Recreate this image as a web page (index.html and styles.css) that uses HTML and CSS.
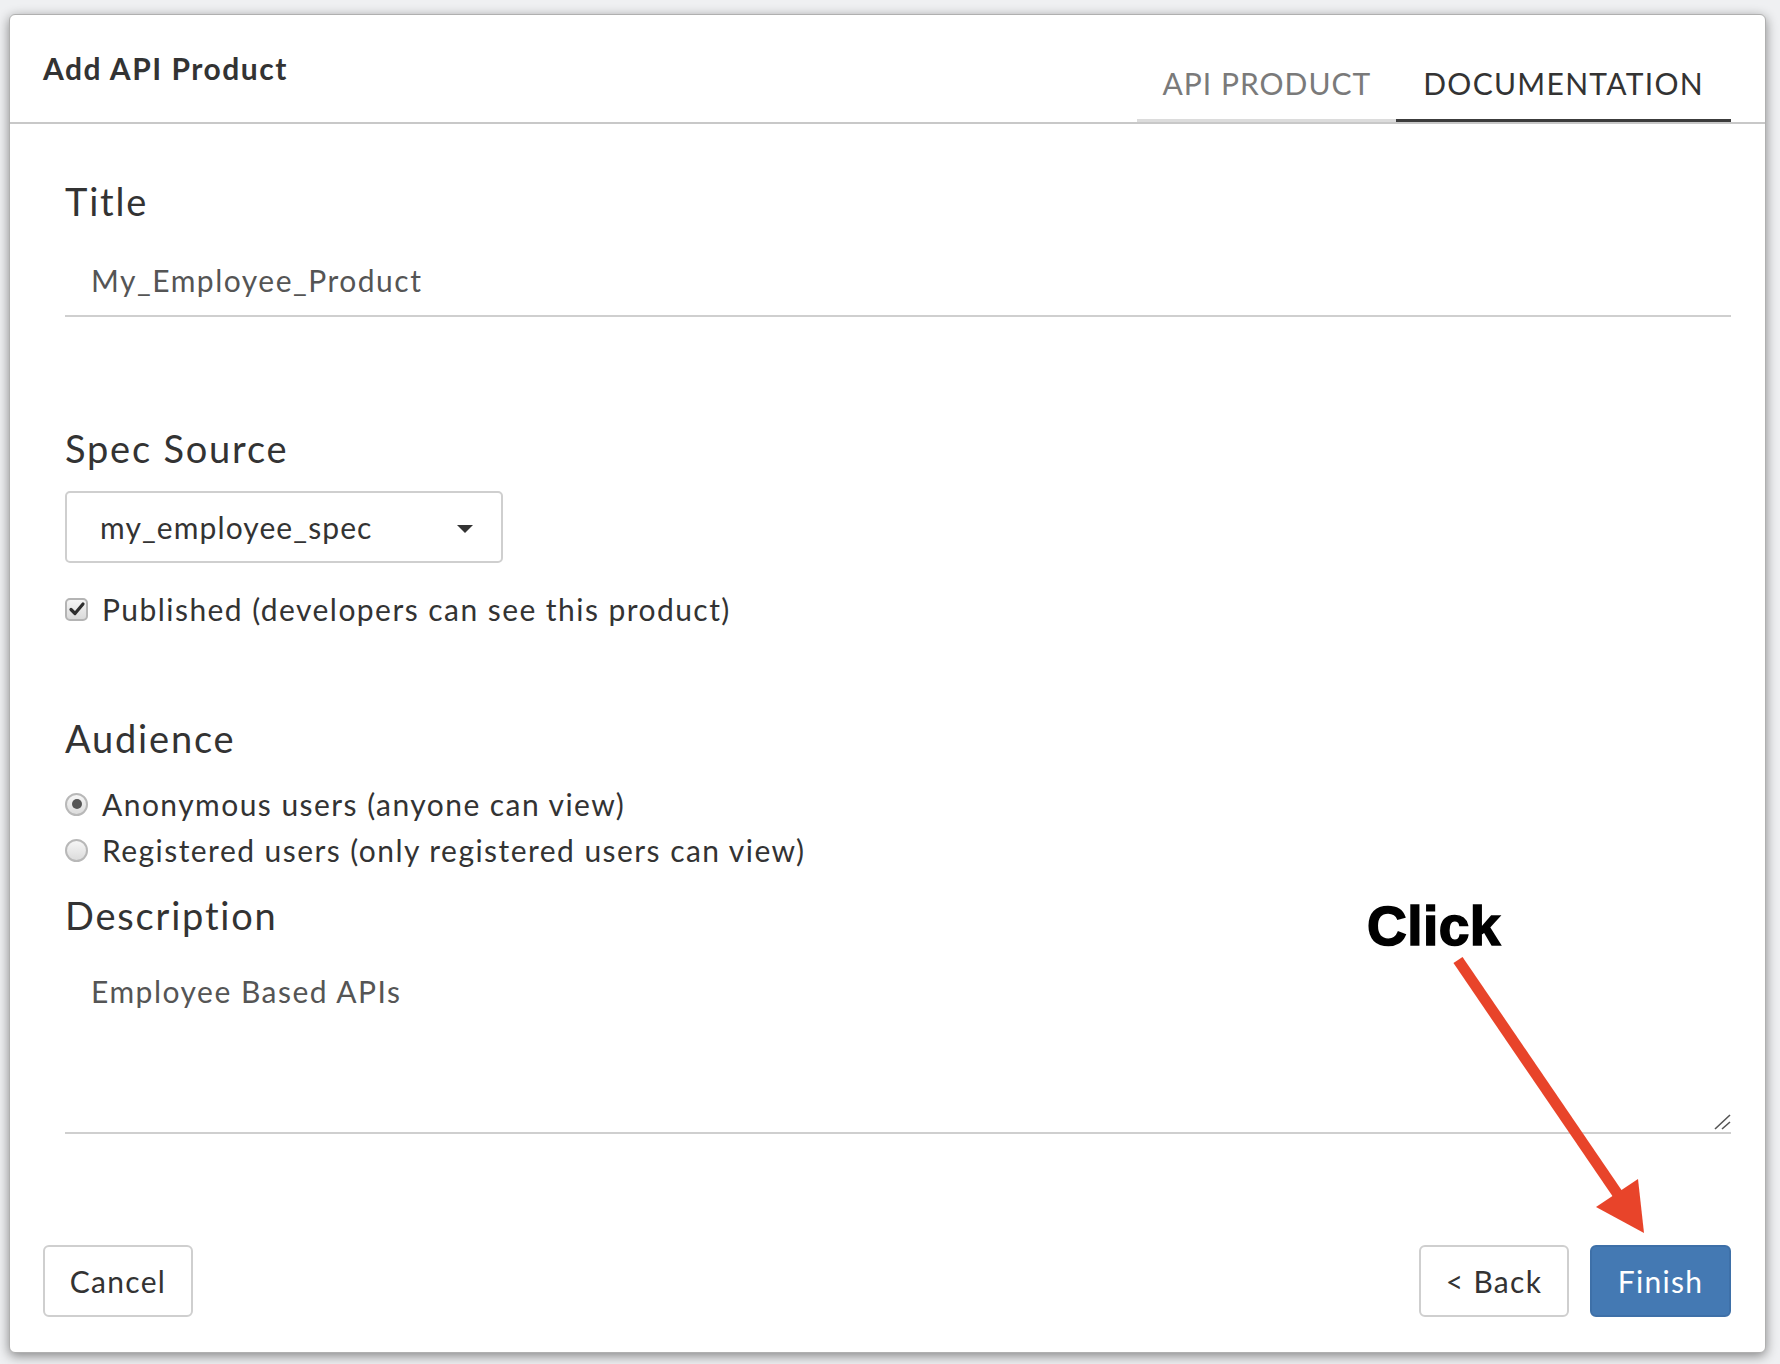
FILE: index.html
```html
<!DOCTYPE html>
<html lang="en">
<head>
<meta charset="utf-8">
<title>Add API Product</title>
<link rel="stylesheet" href="styles.css">
</head>
<body>
<div class="dialog">
  <header class="dlg-header">
    <h1 class="dlg-title">Add API Product</h1>
    <nav class="tabs">
      <span class="tab tab-product">API PRODUCT</span>
      <span class="tab active">DOCUMENTATION</span>
    </nav>
  </header>

  <main class="dlg-body">
    <section class="field field-title">
      <div class="field-label">Title</div>
      <div class="text-input">My_Employee_Product</div>
    </section>

    <section class="field field-spec">
      <div class="field-label">Spec Source</div>
      <div class="select">
        <span class="select-value">my_employee_spec</span>
        <span class="caret"></span>
      </div>
      <div class="check-row">
        <span class="checkbox">
          <svg viewBox="0 0 22 22" width="22" height="22"><path d="M5 11.5 L9 15.5 L17 6" fill="none" stroke="#2e2e2e" stroke-width="3.2" stroke-linecap="round" stroke-linejoin="round"/></svg>
        </span>
        <span class="opt-label">Published (developers can see this product)</span>
      </div>
    </section>

    <section class="field field-audience">
      <div class="field-label">Audience</div>
      <div class="radio-row">
        <span class="radio checked"></span>
        <span class="opt-label">Anonymous users (anyone can view)</span>
      </div>
      <div class="radio-row">
        <span class="radio"></span>
        <span class="opt-label">Registered users (only registered users can view)</span>
      </div>
    </section>

    <section class="field field-desc">
      <div class="field-label">Description</div>
      <div class="textarea">
        <span class="textarea-value">Employee Based APIs</span>
        <svg class="grip" viewBox="0 0 17 16" width="17" height="16"><path d="M1 15 L16 1 M8 15 L16 8" stroke="#555" stroke-width="1.6" fill="none"/></svg>
      </div>
    </section>
  </main>

  <footer class="dlg-footer">
    <button class="btn btn-cancel">Cancel</button>
    <div class="footer-right">
      <button class="btn btn-back">&lt; Back</button>
      <button class="btn btn-primary">Finish</button>
    </div>
  </footer>
</div>

<div class="annotation">
  <div class="click-text">Click</div>
  <svg class="arrow" viewBox="0 0 1780 1364" width="1780" height="1364">
    <line x1="1458" y1="960" x2="1619" y2="1196" stroke="#e8442a" stroke-width="11"/>
    <polygon points="1644,1233 1596,1207 1638,1179" fill="#e8442a"/>
  </svg>
</div>
</body>
</html>
```

FILE: styles.css
```css
* { box-sizing: border-box; }

html, body {
  margin: 0;
  padding: 0;
}

body {
  width: 1780px;
  height: 1364px;
  background: #eff0f2;
  font-family: Lato, "Open Sans", "Liberation Sans", sans-serif;
  color: #333;
  position: relative;
  overflow: hidden;
  padding: 14px 0 0 9px;
}

.dialog {
  width: 1757px;
  height: 1339px;
  background: #fff;
  border: 1px solid #b0b0b0;
  border-radius: 6px;
  box-shadow: 0 3px 12px rgba(0, 0, 0, 0.45);
  display: flex;
  flex-direction: column;
}

/* header */
.dlg-header {
  height: 109px;
  border-bottom: 2px solid #c8c8c8;
  display: flex;
  justify-content: space-between;
  flex-shrink: 0;
}

.dlg-title {
  margin: 0;
  padding: 33px 0 0 33px;
  font-size: 30px;
  line-height: 40px;
  font-weight: 700;
  color: #333;
  letter-spacing: 1.5px;
}

.tabs {
  align-self: flex-end;
  display: flex;
  margin-right: 34px;
}

.tab {
  padding: 0 27px 17px;
  font-size: 30px;
  line-height: 38px;
  color: #7a7a7a;
  border-bottom: 3px solid #dcdcdc;
  letter-spacing: 1.3px;
}

.tab-product {
  padding: 0 25px 17px 26px;
  letter-spacing: 1px;
}

.tab.active {
  color: #333;
  border-bottom-color: #3c3c3c;
}

/* body */
.dlg-body {
  padding: 0 34px 0 55px;
}

.field-label {
  font-size: 38px;
  line-height: 46px;
  color: #333;
  letter-spacing: 1.8px;
}

.field-title { padding-top: 54px; }

.text-input {
  margin-top: 21px;
  height: 72px;
  padding-left: 26px;
  font-size: 30px;
  line-height: 70px;
  color: #555;
  border-bottom: 2px solid #cfcfcf;
  letter-spacing: 1.5px;
}

.field-spec { padding-top: 108px; }

.select {
  margin-top: 20px;
  width: 438px;
  height: 72px;
  border: 2px solid #cfcfcf;
  border-radius: 5px;
  display: flex;
  align-items: center;
  justify-content: space-between;
  padding: 0 28px 0 33px;
}

.select-value {
  font-size: 30px;
  color: #333;
  letter-spacing: 1.1px;
}

.caret {
  width: 0;
  height: 0;
  border-left: 8px solid transparent;
  border-right: 8px solid transparent;
  border-top: 8px solid #333;
  margin-top: 3px;
}

.check-row,
.radio-row {
  display: flex;
  align-items: center;
  gap: 14px;
  height: 46px;
}

.check-row { margin-top: 23px; }

.opt-label {
  font-size: 30px;
  color: #333;
  letter-spacing: 1.45px;
}

.checkbox {
  width: 23px;
  height: 23px;
  border: 2px solid #b4b4b4;
  border-radius: 5px;
  background: linear-gradient(#f4f4f4, #dadada);
  display: flex;
  align-items: center;
  justify-content: center;
  flex-shrink: 0;
}

.checkbox svg { display: block; margin: -2px; }

.field-audience { padding-top: 83px; }

.field-audience .field-label { margin-bottom: 20px; }

.radio {
  width: 23px;
  height: 23px;
  border-radius: 50%;
  border: 2px solid #b8b8b8;
  background: linear-gradient(#f6f6f6, #dcdcdc);
  position: relative;
  flex-shrink: 0;
}

.radio.checked::after {
  content: "";
  position: absolute;
  left: 4.5px;
  top: 4.5px;
  width: 10px;
  height: 10px;
  border-radius: 50%;
  background: #555;
}

.field-desc { padding-top: 19px; }

.textarea {
  margin-top: 16px;
  height: 180px;
  padding: 17px 0 0 26px;
  border-bottom: 2px solid #cfcfcf;
  position: relative;
}

.textarea-value {
  font-size: 30px;
  line-height: 40px;
  color: #555;
  letter-spacing: 1.5px;
}

.grip {
  position: absolute;
  right: 0;
  bottom: 2px;
}

/* footer */
.dlg-footer {
  margin-top: auto;
  display: flex;
  justify-content: space-between;
  align-items: center;
  padding: 0 34px 35px 33px;
}

.footer-right {
  display: flex;
  gap: 21px;
}

.btn {
  height: 72px;
  padding: 0;
  font-family: Lato, "Open Sans", "Liberation Sans", sans-serif;
  font-size: 30px;
  color: #333;
  background: #fff;
  border: 2px solid #cfcfcf;
  border-radius: 6px;
  letter-spacing: 1.3px;
  text-align: center;
}

.btn-cancel { width: 150px; }

.btn-back { width: 150px; }

.btn-primary {
  width: 141px;
  background: #4479b3;
  border-color: #3e70a8;
  color: #fff;
}

/* annotation overlay */
.annotation {
  position: absolute;
  left: 0;
  top: 0;
  width: 1780px;
  height: 1364px;
  pointer-events: none;
}

.arrow {
  position: absolute;
  left: 0;
  top: 0;
}

.click-text {
  position: absolute;
  left: 1367px;
  top: 899px;
  font-family: "Liberation Sans", Arial, sans-serif;
  font-weight: 700;
  font-size: 55px;
  line-height: 55px;
  color: #000;
  letter-spacing: 0.5px;
  -webkit-text-stroke: 1.6px #000;
}
```
